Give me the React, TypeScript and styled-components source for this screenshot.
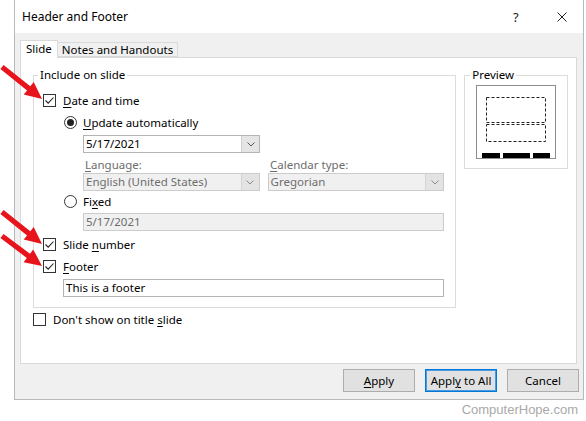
import React from "react";
import styled, { createGlobalStyle } from "styled-components";

const GlobalStyle = createGlobalStyle`
  html, body { margin: 0; padding: 0; background: #fff; }
  body {
    font-family: "Noto Sans", "Open Sans", sans-serif;
    font-size: 11.5px;
    color: #000;
  }
`;

const Page = styled.div`
  position: relative;
  width: 586px;
  height: 421px;
  padding: 0 3px 0 14px;
  box-sizing: border-box;
`;

const Dialog = styled.div`
  width: 570px;
  height: 400px;
  box-sizing: border-box;
  border: 1px solid #b9b9b9;
  border-top: none;
  background: #f0f0f0;
  display: flex;
  flex-direction: column;
`;

const TitleBar = styled.div`
  height: 33px;
  background: #fff;
  display: flex;
  align-items: center;
  padding: 0 16px 0 7px;
  font-size: 12px;
`;

const Title = styled.span`
  flex: 1;
`;

const HelpMark = styled.span`
  width: 10px;
  margin-right: 34px;
  font-size: 13px;
  color: #222;
`;

const Body = styled.div`
  padding: 7px 6px 0 5px;
  display: flex;
  flex-direction: column;
`;

const TabStrip = styled.div`
  display: flex;
  align-items: flex-end;
  height: 17px;
`;

const Tab = styled.div<{ $active?: boolean }>`
  box-sizing: border-box;
  height: ${(p) => (p.$active ? "18px" : "15px")};
  margin-bottom: ${(p) => (p.$active ? "-1px" : "0")};
  padding: 0 ${(p) => (p.$active ? "5px" : "4px")};
  border: 1px solid #d9d9d9;
  border-bottom: ${(p) => (p.$active ? "none" : "1px solid #d9d9d9")};
  border-left: ${(p) => (p.$active ? "1px solid #d9d9d9" : "none")};
  background: ${(p) => (p.$active ? "#fff" : "#f0f0f0")};
  line-height: ${(p) => (p.$active ? "16px" : "13px")};
  position: relative;
  z-index: 1;
`;

const Panel = styled.div`
  height: 307px;
  box-sizing: border-box;
  border: 1px solid #d9d9d9;
  background: #fff;
  padding: 10px 8px 0 12px;
  display: flex;
  flex-direction: column;
`;

const PanelTop = styled.div`
  display: flex;
  align-items: flex-start;
  gap: 8px;
`;

const Group = styled.fieldset<{ $width: number }>`
  margin: 0;
  width: ${(p) => p.$width}px;
  min-inline-size: 0;
  box-sizing: border-box;
  border: 1px solid #dcdcdc;
  padding: 0 11px 10px 9px;
`;

const PreviewGroup = styled(Group)`
  padding: 3px 0 9px 11px;
`;

const Legend = styled.legend<{ $shift: number }>`
  padding: 0 2px;
  margin-left: ${(p) => p.$shift}px;
  line-height: 14px;
`;

const Row = styled.div<{ $h: number; $mt?: number; $indent?: number; $gap?: number }>`
  display: flex;
  align-items: center;
  height: ${(p) => p.$h}px;
  margin-top: ${(p) => p.$mt ?? 0}px;
  padding-left: ${(p) => p.$indent ?? 0}px;
  gap: ${(p) => p.$gap ?? 0}px;
`;

const Box = styled.span`
  width: 13px;
  height: 13px;
  box-sizing: border-box;
  border: 1px solid #333;
  background: #fff;
  display: inline-flex;
  align-items: center;
  justify-content: center;
  flex: none;
`;

const Radio = styled.span<{ $on?: boolean }>`
  width: 13px;
  height: 13px;
  box-sizing: border-box;
  border: 1px solid #333;
  border-radius: 50%;
  background: #fff;
  display: inline-flex;
  align-items: center;
  justify-content: center;
  flex: none;
  &::after {
    content: "";
    display: ${(p) => (p.$on ? "block" : "none")};
    width: 7px;
    height: 7px;
    border-radius: 50%;
    background: #222;
  }
`;

const Label = styled.span<{ $gap: number; $muted?: boolean; $w?: number }>`
  margin-left: ${(p) => p.$gap}px;
  width: ${(p) => (p.$w ? `${p.$w}px` : "auto")};
  color: ${(p) => (p.$muted ? "#6d6d6d" : "#000")};
  white-space: nowrap;
`;

const Key = styled.u`
  text-underline-offset: 2px;
`;

const Field = styled.div<{ $w: number; $disabled?: boolean }>`
  width: ${(p) => p.$w}px;
  height: 18px;
  box-sizing: border-box;
  border: 1px solid ${(p) => (p.$disabled ? "#cccccc" : "#b4b4b4")};
  background: ${(p) => (p.$disabled ? "#f0f0f0" : "#fff")};
  color: ${(p) => (p.$disabled ? "#6d6d6d" : "#000")};
  display: flex;
  align-items: stretch;
`;

const FieldText = styled.span`
  flex: 1;
  padding-left: 2px;
  line-height: 16px;
  white-space: nowrap;
`;

const DropButton = styled.span<{ $disabled?: boolean }>`
  width: 17px;
  background: ${(p) => (p.$disabled ? "#e3e3e3" : "#e5e5e5")};
  border-left: 1px solid ${(p) => (p.$disabled ? "#d4d4d4" : "#cfcfcf")};
  display: flex;
  align-items: center;
  justify-content: center;
`;

const PreviewPic = styled.svg`
  display: block;
`;

const Footer = styled.div`
  display: flex;
  justify-content: flex-end;
  gap: 10px;
  padding-top: 5px;
  margin-right: -2px;
`;

const Button = styled.div<{ $default?: boolean }>`
  width: 72px;
  height: 23px;
  box-sizing: border-box;
  border: 1px solid ${(p) => (p.$default ? "#0078d7" : "#adadad")};
  box-shadow: ${(p) => (p.$default ? "inset 0 0 0 1px #4a9be0" : "none")};
  background: #e1e1e1;
  display: flex;
  align-items: center;
  justify-content: center;
`;

const Watermark = styled.div`
  text-align: right;
  padding: 2px 5px 0 0;
  font-family: "Liberation Sans", Arial, sans-serif;
  font-size: 13px;
  color: #a9a9a9;
`;

const Overlay = styled.svg`
  position: absolute;
  left: 0;
  top: 0;
  pointer-events: none;
`;

const Check = () => (
  <svg width="11" height="11" viewBox="0 0 11 11">
    <path d="M1.5 5.5 L4.2 8.2 L9.5 2.5" fill="none" stroke="#222" strokeWidth="1.1" />
  </svg>
);

const Chevron = ({ color = "#555" }: { color?: string }) => (
  <svg width="8" height="5" viewBox="0 0 8 5">
    <path d="M0.5 0.5 L4 4 L7.5 0.5" fill="none" stroke={color} strokeWidth="1" />
  </svg>
);

const Dropdown = ({ w, text, disabled }: { w: number; text: string; disabled?: boolean }) => (
  <Field $w={w} $disabled={disabled}>
    <FieldText>{text}</FieldText>
    <DropButton $disabled={disabled}>
      <Chevron color={disabled ? "#8a8a8a" : "#555"} />
    </DropButton>
  </Field>
);

const CheckRow = ({ children, mt }: { children: React.ReactNode; mt?: number }) => (
  <Row $h={20} $mt={mt}>
    <Box>
      <Check />
    </Box>
    <Label $gap={7}>{children}</Label>
  </Row>
);

type Pt = [number, number];
const arrowPoints = (tail: Pt, tip: Pt) => {
  const dx = tip[0] - tail[0];
  const dy = tip[1] - tail[1];
  const len = Math.hypot(dx, dy);
  const ux = dx / len;
  const uy = dy / len;
  const nx = -uy;
  const ny = ux;
  const head = 17;
  const hw = 8;
  const sw = 2.6;
  const bx = tip[0] - ux * head;
  const by = tip[1] - uy * head;
  const pts: Pt[] = [
    [tail[0] + nx * sw, tail[1] + ny * sw],
    [bx + nx * sw, by + ny * sw],
    [bx + nx * hw, by + ny * hw],
    tip,
    [bx - nx * hw, by - ny * hw],
    [bx - nx * sw, by - ny * sw],
    [tail[0] - nx * sw, tail[1] - ny * sw],
  ];
  return pts.map((p) => `${p[0].toFixed(1)},${p[1].toFixed(1)}`).join(" ");
};

const arrows: [Pt, Pt][] = [
  [[2, 67], [42, 99]],
  [[2, 212], [42, 244]],
  [[2, 236], [42, 266]],
];

const App = () => {
  return (
    <Page>
      <GlobalStyle />
      <Dialog>
        <TitleBar>
          <Title>Header and Footer</Title>
          <HelpMark>?</HelpMark>
          <svg width="10" height="10" viewBox="0 0 10 10">
            <path d="M0.5 0.5 L9.5 9.5 M9.5 0.5 L0.5 9.5" stroke="#222" strokeWidth="1" />
          </svg>
        </TitleBar>
        <Body>
          <TabStrip>
            <Tab $active>Slide</Tab>
            <Tab>Notes and Handouts</Tab>
          </TabStrip>
          <Panel>
            <PanelTop>
              <Group $width={424}>
                <Legend $shift={-5}>Include on slide</Legend>
                <Row $h={20} $mt={8}>
                  <Box>
                    <Check />
                  </Box>
                  <Label $gap={7}>
                    <Key>D</Key>ate and time
                  </Label>
                </Row>
                <Row $h={22} $mt={1} $indent={21}>
                  <Radio $on />
                  <Label $gap={6}>
                    <Key>U</Key>pdate automatically
                  </Label>
                </Row>
                <Row $h={18} $mt={2} $indent={40}>
                  <Dropdown w={177} text="5/17/2021" />
                </Row>
                <Row $h={16} $mt={3} $indent={42}>
                  <Label $gap={0} $muted $w={185}>
                    <Key>L</Key>anguage:
                  </Label>
                  <Label $gap={0} $muted>
                    <Key>C</Key>alendar type:
                  </Label>
                </Row>
                <Row $h={18} $mt={1} $indent={40} $gap={8}>
                  <Dropdown w={177} text="English (United States)" disabled />
                  <Dropdown w={177} text="Gregorian" disabled />
                </Row>
                <Row $h={20} $indent={21}>
                  <Radio />
                  <Label $gap={6}>
                    Fi<Key>x</Key>ed
                  </Label>
                </Row>
                <Row $h={18} $mt={2} $indent={40}>
                  <Field $w={362} $disabled>
                    <FieldText>5/17/2021</FieldText>
                  </Field>
                </Row>
                <CheckRow mt={3}>
                  Slide <Key>n</Key>umber
                </CheckRow>
                <CheckRow mt={2}>
                  <Key>F</Key>ooter
                </CheckRow>
                <Row $h={18} $mt={3} $indent={20}>
                  <Field $w={382}>
                    <FieldText>This is a footer</FieldText>
                  </Field>
                </Row>
              </Group>
              <PreviewGroup $width={104}>
                <Legend $shift={-6}>Preview</Legend>
                <PreviewPic width="80" height="74" viewBox="0 0 80 74">
                  <rect x="0.5" y="0.5" width="79" height="73" fill="#fff" stroke="#8c8c8c" />
                  <rect x="10.5" y="12.5" width="59" height="25" fill="none" stroke="#222" strokeDasharray="3 2" />
                  <rect x="10.5" y="39.5" width="59" height="17" fill="none" stroke="#222" strokeDasharray="3 2" />
                  <rect x="6" y="68" width="18" height="5" fill="#000" />
                  <rect x="27" y="68" width="27" height="5" fill="#000" />
                  <rect x="57" y="68" width="17" height="5" fill="#000" />
                </PreviewPic>
              </PreviewGroup>
            </PanelTop>
            <Row $h={20} $mt={1}>
              <Box />
              <Label $gap={7}>
                Don't show on title <Key>s</Key>lide
              </Label>
            </Row>
          </Panel>
          <Footer>
            <Button>
              <span>
                <Key>A</Key>pply
              </span>
            </Button>
            <Button $default>
              <span>
                Appl<Key>y</Key> to All
              </span>
            </Button>
            <Button>Cancel</Button>
          </Footer>
        </Body>
      </Dialog>
      <Watermark>ComputerHope.com</Watermark>
      <Overlay width="586" height="421">
        {arrows.map(([tail, tip], i) => (
          <polygon key={i} points={arrowPoints(tail, tip)} fill="#e8141b" />
        ))}
      </Overlay>
    </Page>
  );
};

export default App;
